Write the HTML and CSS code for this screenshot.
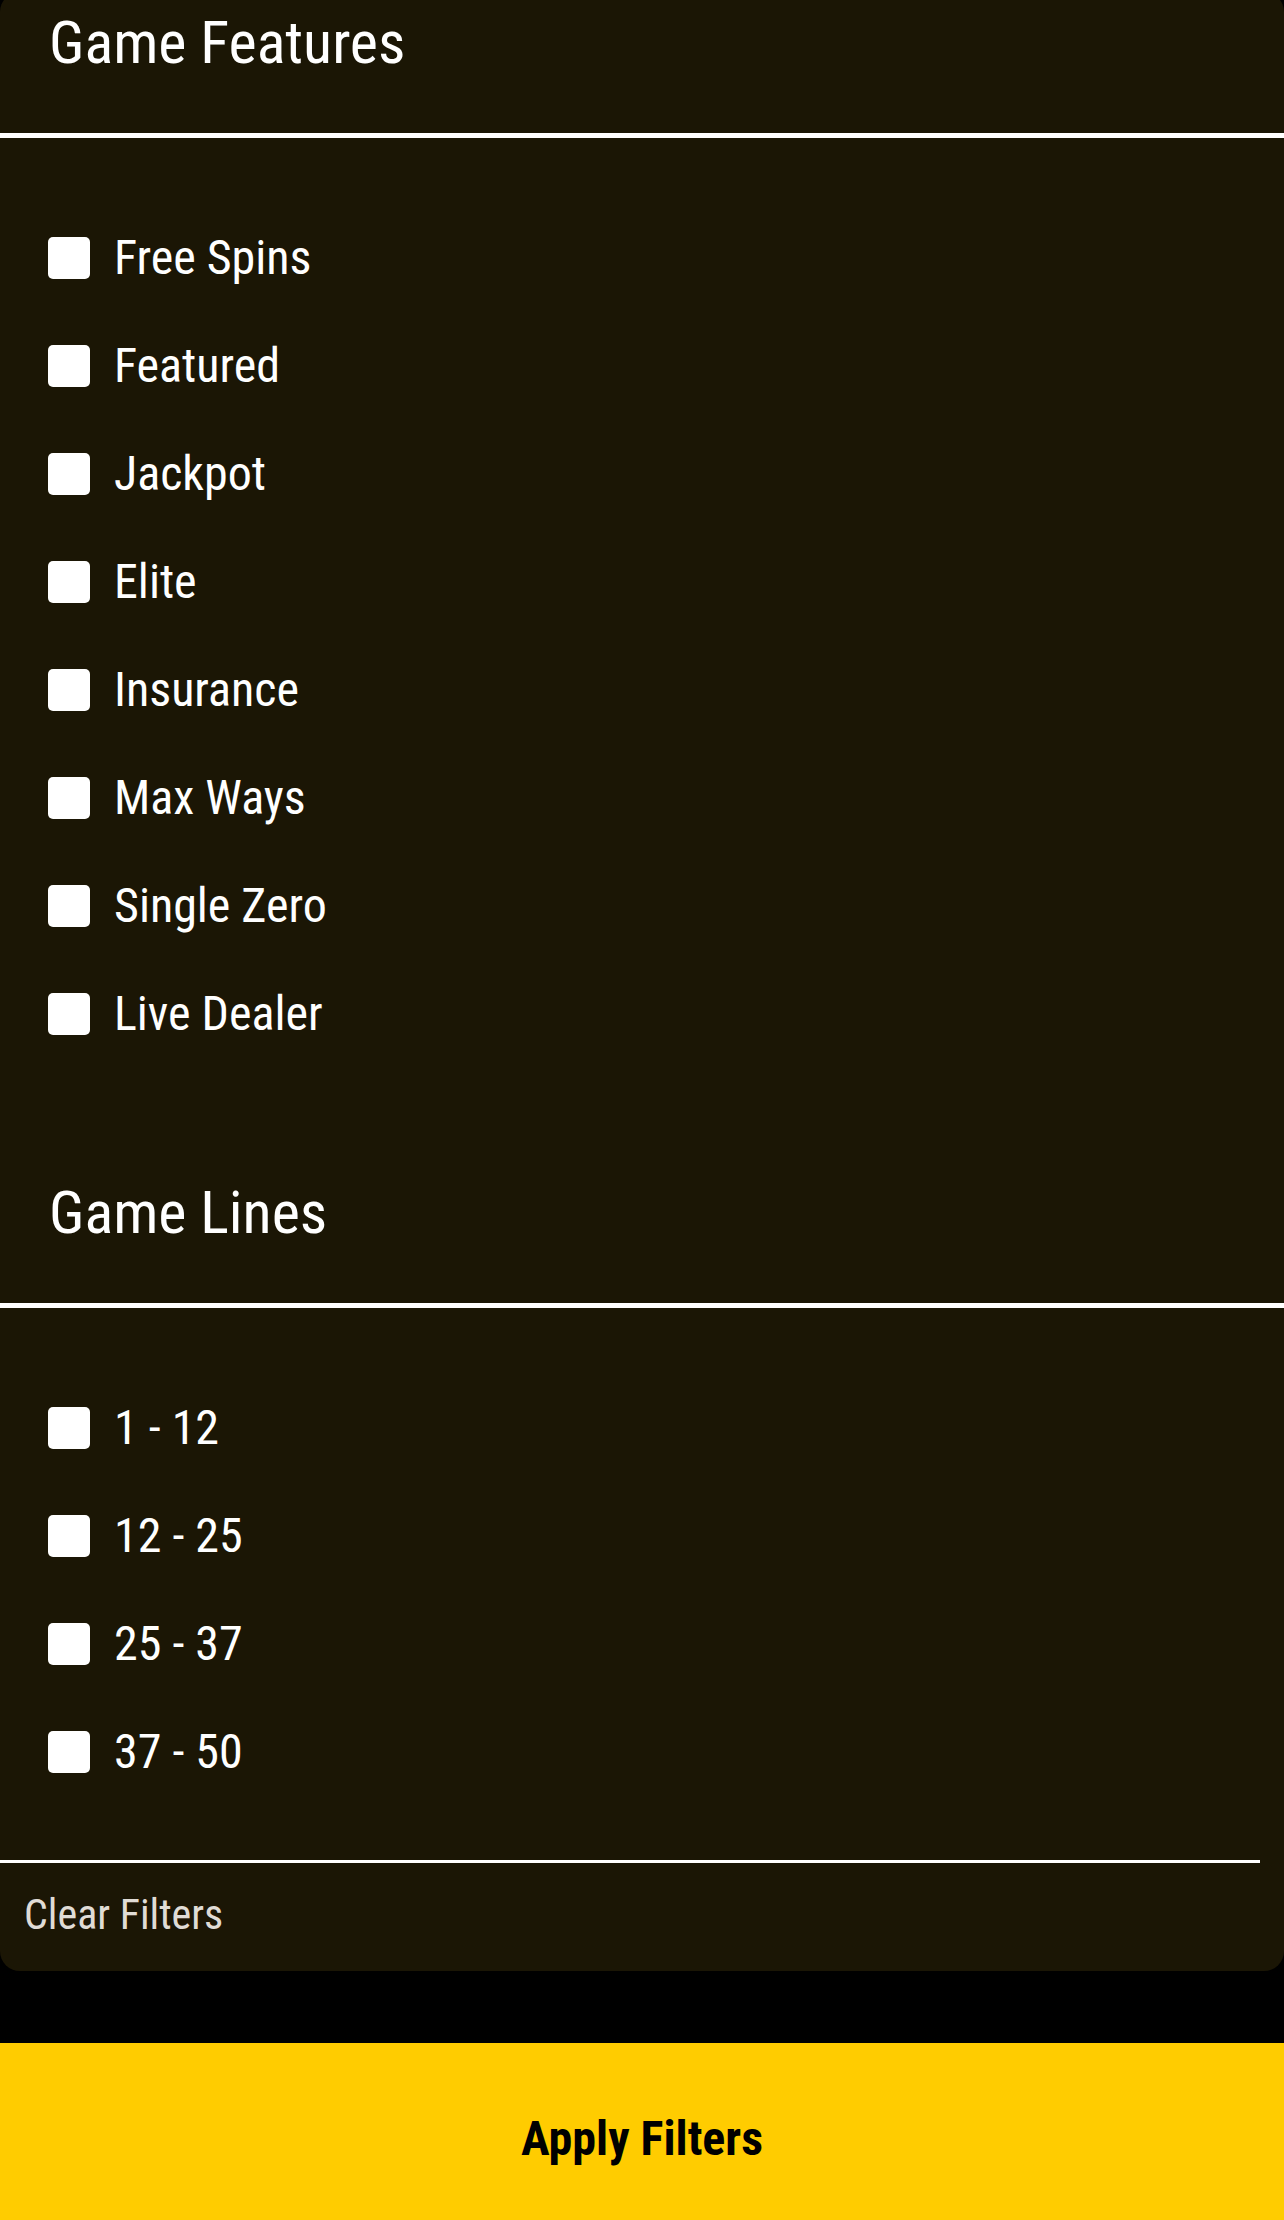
FILE: index.html
```html
<!DOCTYPE html>
<html lang="en">
<head>
<meta charset="utf-8">
<title>Filters</title>
<link rel="stylesheet" href="styles.css">
</head>
<body>
<div class="sheet">
  <div class="panel">
    <h2 class="section-title first">Game Features</h2>
    <div class="rule"></div>
    <ul class="options">
      <li class="option"><span class="box"></span><span class="label">Free Spins</span></li>
      <li class="option"><span class="box"></span><span class="label">Featured</span></li>
      <li class="option"><span class="box"></span><span class="label">Jackpot</span></li>
      <li class="option"><span class="box"></span><span class="label">Elite</span></li>
      <li class="option"><span class="box"></span><span class="label">Insurance</span></li>
      <li class="option"><span class="box"></span><span class="label">Max Ways</span></li>
      <li class="option"><span class="box"></span><span class="label">Single Zero</span></li>
      <li class="option"><span class="box"></span><span class="label">Live Dealer</span></li>
    </ul>
    <h2 class="section-title">Game Lines</h2>
    <div class="rule"></div>
    <ul class="options">
      <li class="option"><span class="box"></span><span class="label">1 - 12</span></li>
      <li class="option"><span class="box"></span><span class="label">12 - 25</span></li>
      <li class="option"><span class="box"></span><span class="label">25 - 37</span></li>
      <li class="option"><span class="box"></span><span class="label">37 - 50</span></li>
    </ul>
    <div class="divider"></div>
    <div class="clear">Clear Filters</div>
  </div>
  <div class="gap"></div>
  <button class="apply">Apply Filters</button>
</div>
</body>
</html>
```
FILE: styles.css
```css
html, body {
  margin: 0;
  padding: 0;
  background: #000;
}
body {
  font-family: "Roboto Condensed", Roboto, "Liberation Sans", sans-serif;
  font-stretch: 87.5%;
  color: #fff;
  overflow: hidden;
}
.sheet {
  width: 1284px;
  height: 2220px;
  display: flex;
  flex-direction: column;
}
.panel {
  background: #1b1605;
  border-radius: 20px;
  margin-top: -8px;
  padding-top: 17px;
  display: flex;
  flex-direction: column;
}
.section-title {
  margin: 0;
  padding: 0 0 56px 49px;
  font-size: 60px;
  line-height: 68px;
  font-weight: 400;
}
.section-title:not(.first) {
  padding-top: 111px;
}
.rule {
  height: 5px;
  background: #fff;
}
.options {
  list-style: none;
  margin: 0;
  padding: 66px 0 0 48px;
}
.option {
  height: 108px;
  display: flex;
  align-items: center;
  gap: 24px;
}
.box {
  width: 42px;
  height: 42px;
  border-radius: 5px;
  background: #fff;
  flex: none;
}
.label {
  font-size: 48px;
  line-height: 56px;
}
.divider {
  margin-top: 54px;
  height: 3px;
  width: 1260px;
  background: #fff;
}
.clear {
  padding: 28px 0 0 24px;
  height: 80px;
  font-size: 42px;
  line-height: 48px;
  color: #e0dcd6;
}
.gap {
  height: 72px;
  flex: none;
}
.apply {
  flex: 1;
  border: 0;
  margin: 0;
  background: #ffcc00;
  color: #000;
  font-family: inherit;
  font-stretch: 87.5%;
  font-size: 48px;
  font-weight: 700;
  padding: 14px 0 0 0;
}
```
